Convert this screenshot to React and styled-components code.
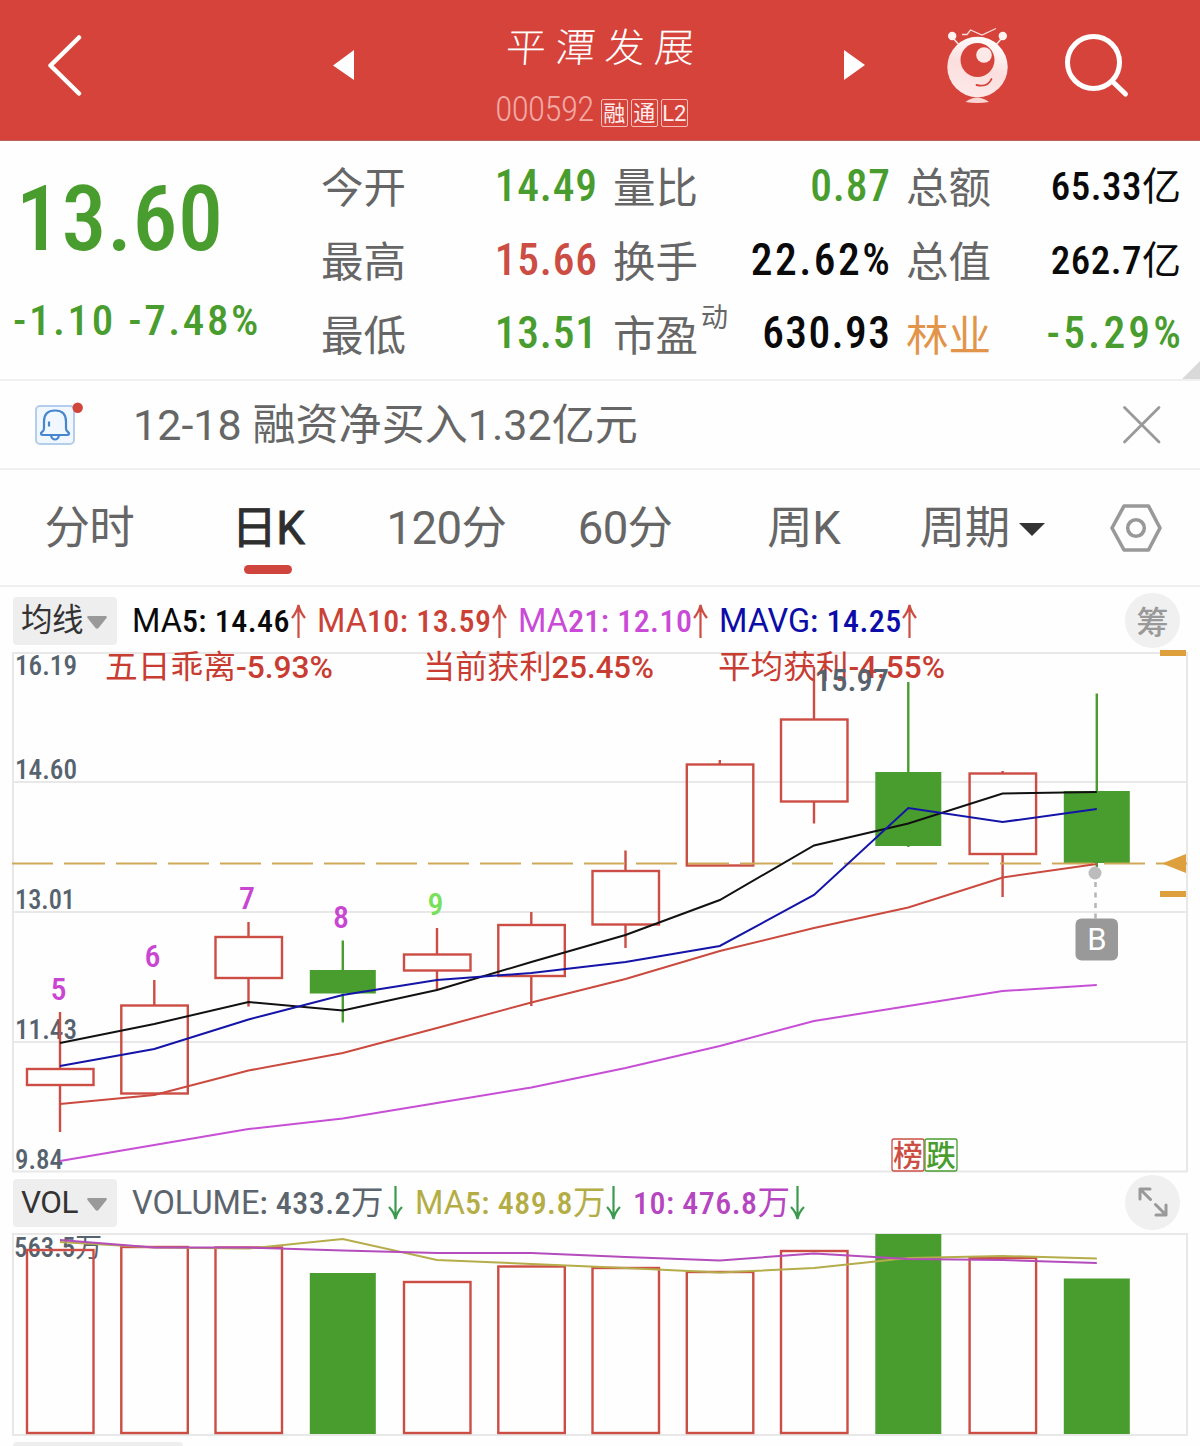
import React from "react";
import styled, { createGlobalStyle } from "styled-components";

const RED = "#d6433b";
const UP = "#cb4d44";
const GREEN = "#489d2e";
const SLATE = "#56636e";
const FONT = `Roboto, "Noto Sans CJK SC", "Liberation Sans", sans-serif`;

const Global = createGlobalStyle`
  * { box-sizing: border-box; }
  body { margin: 0; background: #fefefe; font-family: ${FONT}; }
  svg { display: block; flex: none; }
`;

const Page = styled.main`
  width: 1200px;
  height: 1446px;
  overflow: hidden;
  display: flex;
  flex-direction: column;
  background: #fefefe;
`;

/* Header */
const Header = styled.header`
  height: 141px;
  flex: none;
  display: grid;
  grid-template-columns: 333px 23px 488px 103px 117px 1fr;
  background: ${RED};
  border-bottom: 1px solid #b9635e;
  color: #fff;
`;
const HeaderCell = styled.div`
  padding-top: ${(p) => p.$top}px;
  padding-left: ${(p) => p.$left || 0}px;
`;
const TitleBlock = styled.div`
  display: flex;
  flex-direction: column;
  align-items: center;
`;
const StockName = styled.h1`
  margin: 20px 0 0;
  padding-left: 10px;
  font-size: 40px;
  line-height: 58px;
  font-weight: 300;
  letter-spacing: 9.5px;
  transform: skewX(-4deg);
`;
const CodeRow = styled.div`
  display: flex;
  align-items: center;
  gap: 3px;
  margin-top: 14px;
  margin-left: -17px;
  height: 36px;
`;
const Code = styled.span`
  font-size: 35px;
  font-weight: 300;
  font-stretch: 75%;
  letter-spacing: -0.6px;
  line-height: 36px;
  color: #f3a9a3;
  margin-right: 4px;
`;
const Badge = styled.span`
  width: 27px;
  height: 28px;
  margin-top: 5px;
  border: 1px solid #f6bdb8;
  border-radius: 2px;
  font-size: 22px;
  line-height: 27px;
  text-align: center;
  color: #fdeceb;
`;

/* Quote */
const Quote = styled.section`
  height: 240px;
  flex: none;
  display: grid;
  grid-template-columns: 321px 276px 16px 277px 16px 275px 1fr;
  border-bottom: 2px solid #f0f0f0;
`;
const PriceBox = styled.div`
  display: flex;
  flex-direction: column;
  color: ${GREEN};
  font-weight: 500;
  font-stretch: 75%;
  white-space: nowrap;
`;
const Price = styled.div`
  margin: 27px 0 0 16px;
  font-size: 90px;
  line-height: 104px;
  letter-spacing: 0.5px;
`;
const Change = styled.div`
  margin: 23px 0 0 13px;
  font-size: 43px;
  line-height: 50px;
  letter-spacing: 2.6px;
`;
const StatColumn = styled.dl`
  margin: 0;
  padding-top: 9px;
  grid-column: ${(p) => p.$col};
`;
const Stat = styled.div`
  display: flex;
  justify-content: space-between;
  height: 73.7px;
  align-items: center;
`;
const StatLabel = styled.dt`
  display: flex;
  margin-top: 5px;
  font-size: 42.5px;
  line-height: 74px;
  color: ${(p) => p.$color || "#666"};
`;
const Sup = styled.sup`
  font-size: 27px;
  line-height: 30px;
  margin: 3px 0 0 3px;
`;
const StatValue = styled.dd`
  margin: 0 ${(p) => (p.$track ? -p.$track : -0.8)}px 0 0;
  font-size: ${(p) => (p.$small ? 39 : 43.5)}px;
  font-weight: 500;
  font-stretch: 75%;
  line-height: 74px;
  letter-spacing: ${(p) => p.$track || 0.8}px;
  color: ${(p) => p.$color || "#0a0a0a"};
`;
const Unit = styled.span`
  font-weight: 400;
`;
const Corner = styled.div`
  align-self: end;
  justify-self: end;
  width: 18px;
  height: 18px;
  background: #d9d9d9;
  clip-path: polygon(100% 0, 100% 100%, 0 100%);
`;

/* Notice */
const Notice = styled.section`
  height: 89px;
  flex: none;
  display: flex;
  align-items: center;
  padding: 0 38px 0 34px;
  border-bottom: 2px solid #f0f0f0;
`;
const NoticeText = styled.p`
  flex: 1;
  margin: 1px 0 0 49px;
  color: #666;
  font-size: 43px;
  line-height: 60px;
  letter-spacing: 0.05px;
  white-space: nowrap;
`;

/* Period tabs */
const Tabs = styled.nav`
  height: 117px;
  flex: none;
  display: grid;
  grid-template-columns: repeat(6, 178.6px) 1fr;
  border-bottom: 2px solid #f0f0f0;
`;
const Tab = styled.button`
  border: 0;
  padding: 28px 0 0;
  background: none;
  font-family: inherit;
  font-size: 45.5px;
  line-height: 62px;
  letter-spacing: -0.6px;
  color: ${(p) => (p.$active ? "#2e2e2e" : "#666")};
  font-weight: 400;
  -webkit-text-stroke: ${(p) => (p.$active ? 0.9 : 0)}px #2e2e2e;
  display: flex;
  flex-direction: column;
  align-items: center;
  white-space: nowrap;
`;
const TabLabel = styled.span`
  display: flex;
  align-items: center;
  gap: 9px;
`;
const Underline = styled.span`
  width: 48px;
  height: 9px;
  margin-top: 5px;
  border-radius: 5px;
  background: #cf443c;
`;
const SettingsCell = styled.div`
  display: flex;
  justify-content: center;
  padding-top: 34px;
`;

/* Indicator legends */
const LegendBar = styled.div`
  height: ${(p) => p.$height}px;
  flex: none;
  display: flex;
  align-items: center;
  padding: ${(p) => p.$top || 0}px 20px 0 13px;
`;
const Selector = styled.button`
  width: 104px;
  height: 48px;
  border: 0;
  border-radius: 4px;
  padding: 0 10px 0 8px;
  display: flex;
  align-items: center;
  justify-content: space-between;
  background: #eee;
  color: #333;
  font-family: inherit;
  font-size: 31.5px;
  line-height: 46px;
  letter-spacing: -0.5px;
  & > svg { margin-top: 3px; }
`;
const Items = styled.div`
  flex: 1;
  display: flex;
  margin-left: 15px;
  margin-top: -1px;
  gap: ${(p) => p.$gap}px;
`;
const Item = styled.div`
  width: ${(p) => p.$width}px;
  display: flex;
  justify-content: space-between;
  align-items: center;
  color: ${(p) => p.$color};
  font-size: 32.5px;
  line-height: 46px;
  white-space: nowrap;
`;
const Name = styled.span`
  font-weight: 400;
`;
const Num = styled.span`
  font-weight: 500;
  font-stretch: 75%;
  font-size: 32px;
  letter-spacing: 0.45px;
`;
const Round = styled.div`
  width: 55px;
  height: 55px;
  margin-top: -2px;
  border-radius: 50%;
  background: #f0f0f0;
  color: #999;
  font-size: 32px;
  font-weight: 500;
  display: flex;
  align-items: center;
  justify-content: center;
`;
const NextPanel = styled.div`
  width: 170px;
  height: 20px;
  flex: none;
  margin: 6px 0 0 13px;
  border-radius: 4px;
  background: #eee;
`;

const Chart = styled.svg`
  overflow: visible;
`;
const SvgText = styled.text`
  font-family: ${FONT};
  font-weight: ${(p) => p.$weight || 500};
  font-size: ${(p) => p.$size || 27}px;
  font-stretch: ${(p) => (p.$wide ? 100 : 75)}%;
`;
const Han = styled.tspan`
  font-weight: 400;
  font-size: ${(p) => (p.$size ? `${p.$size}px` : "inherit")};
`;

const X = [60, 154.3, 248.5, 342.8, 437, 531.3, 625.5, 719.8, 814, 908.3, 1002.6, 1096.8];
// high, body top, body bottom, low
const CANDLES = [
  [1012, 1069, 1085, 1132], [980, 1005.5, 1093.5, 1095], [922, 937, 978, 1006.5],
  [940.5, 970, 993.5, 1022.5], [928, 954.5, 970.5, 990], [912, 925, 976, 1006],
  [850.5, 871, 924.5, 948], [760, 764.5, 865.5, 866], [667, 719.5, 801.5, 823.5],
  [682, 772, 846, 847], [771, 773.5, 854, 897], [693.5, 791, 863, 867],
];
const FALLING = [3, 9, 11];
const MA = [
  ["#cb4a3f", [1104, 1095, 1070.5, 1053, 1028, 1002.5, 979, 951, 928, 907.5, 877.5, 864]],
  ["#c74fd6", [1161, 1145, 1129, 1118.5, 1103, 1087.5, 1068, 1046, 1021, 1006, 991, 985]],
  ["#111", [1043, 1024, 1002, 1010.5, 990, 962, 935, 900, 845.5, 823.5, 793.5, 792]],
  ["#1414a8", [1066, 1049, 1019.5, 995, 980, 973, 962, 946, 895, 808, 822, 809]],
];
const VOLUMES = [1250, 1247, 1247.5, 1273, 1282, 1266.5, 1268, 1272, 1251, 1234, 1258, 1278.5];
const VOL_MA = [
  ["#b5ac4a", [1242, 1247.5, 1248.5, 1239, 1260, 1264, 1268, 1272.5, 1268, 1258, 1256, 1258.5]],
  ["#b44cbc", [1240, 1247.5, 1247.5, 1250.5, 1253, 1253, 1257, 1260.5, 1253.5, 1259, 1260, 1263]],
];
const points = (ys) => ys.map((y, i) => `${X[i]},${y}`).join(" ");

function Lines({ data }) {
  return data.map(([color, ys]) => (
    <polyline key={color} points={points(ys)} fill="none" stroke={color} strokeWidth="2" />
  ));
}

function Label({ x, y, w, children, ...rest }) {
  return (
    <SvgText x={x} y={y} textLength={w} lengthAdjust="spacingAndGlyphs" {...rest}>
      {children}
    </SvgText>
  );
}

function PriceChart() {
  return (
    <Chart width="1200" height="521" viewBox="0 652 1200 521">
      <g fill="none" stroke="#e8e8e8" strokeWidth="2">
        <rect x="13" y="653" width="1174" height="518.5" />
        <path d="M13 782H1187M13 912H1187M13 1042H1187" />
      </g>
      <g fill={SLATE}>
        <Label x="15" y="675" w="62">16.19</Label>
        <Label x="15" y="779" w="62">14.60</Label>
        <Label x="15" y="909" w="60">13.01</Label>
        <Label x="15" y="1039" w="62">11.43</Label>
        <Label x="15" y="1169" w="48">9.84</Label>
      </g>
      {CANDLES.map(([hi, top, bottom, lo], i) => {
        const falling = FALLING.includes(i);
        const color = falling ? GREEN : UP;
        return (
          <g key={i} stroke={color} strokeWidth="2.4" fill={falling ? GREEN : "none"}>
            <path d={`M${X[i]} ${hi}V${top}M${X[i]} ${bottom}V${lo}`} />
            {falling ? (
              <rect x={X[i] - 33} y={top} width="66" height={bottom - top} stroke="none" />
            ) : (
              <rect x={X[i] - 33} y={top} width="66.5" height={bottom - top} />
            )}
          </g>
        );
      })}
      <path d="M12 863.5H1187" stroke="#cfa95a" strokeWidth="2" strokeDasharray="41 11" />
      <Lines data={MA} />
      <g fill="#c93c32">
        <Label x="105" y="677.5" w="228" $size="31" $wide><Han $size="32">五日乖离</Han>-5.93%</Label>
        <Label x="423" y="677.5" w="231" $size="31" $wide><Han $size="32">当前获利</Han>25.45%</Label>
        <Label x="718" y="677.5" w="227" $size="31" $wide><Han $size="32">平均获利</Han>-4.55%</Label>
      </g>
      <Label x="815" y="691" w="74" $size="32" fill={SLATE}>15.97</Label>
      <g fill="#c846d2" textAnchor="middle">
        <SvgText x="58.5" y="1000" $size="32">5</SvgText>
        <SvgText x="152.5" y="967" $size="32">6</SvgText>
        <SvgText x="247" y="909" $size="32">7</SvgText>
        <SvgText x="341" y="928" $size="32">8</SvgText>
        <SvgText x="435.5" y="914.5" $size="32" fill="#78e05a">9</SvgText>
      </g>
      <g fill="#dda03c">
        <rect x="1160" y="650" width="26" height="6" />
        <rect x="1160" y="891" width="26" height="6" />
        <path d="M1162 863.5L1186 854V873Z" />
      </g>
      <circle cx="1095" cy="873" r="6.5" fill="#bcbcbc" />
      <path d="M1095.5 882V919" stroke="#b5b5b5" strokeWidth="2.5" strokeDasharray="5 5.5" />
      <rect x="1075.5" y="918.5" width="42.5" height="42" rx="6" fill="#999" />
      <SvgText x="1097" y="949.5" $size="31" $weight="400" $wide fill="#fff" textAnchor="middle">B</SvgText>
      <rect x="892" y="1139" width="32" height="32" rx="2" fill="#fff" stroke={UP} strokeWidth="1.3" />
      <rect x="925" y="1139" width="32" height="32" rx="2" fill="#fff" stroke={GREEN} strokeWidth="1.3" />
      <SvgText x="908" y="1165.5" $size="29.5" fill={UP} textAnchor="middle">榜</SvgText>
      <SvgText x="941" y="1165.5" $size="29.5" fill={GREEN} textAnchor="middle">跌</SvgText>
    </Chart>
  );
}

function VolumeChart() {
  return (
    <Chart width="1200" height="203" viewBox="0 1233 1200 203">
      <rect x="13" y="1234" width="1174" height="201" fill="none" stroke="#e8e8e8" strokeWidth="2" />
      <Label x="14" y="1257" w="88" fill={SLATE}>563.5<Han>万</Han></Label>
      {VOLUMES.map((top, i) =>
        FALLING.includes(i) ? (
          <rect key={i} x={X[i] - 33} y={top} width="66" height={1434 - top} fill={GREEN} />
        ) : (
          <rect key={i} x={X[i] - 33} y={top} width="66.5" height={1433 - top} fill="none" stroke={UP} strokeWidth="2.4" />
        )
      )}
      <Lines data={VOL_MA} />
    </Chart>
  );
}

function Arrow({ down }) {
  return (
    <svg width="15" height="36" viewBox="0 0 15 36" fill="none" stroke={down ? "#3c9a4e" : UP} strokeWidth="2.2">
      <path d={down ? "M7.5 1V34M1 22Q6 27 7.5 34Q9 27 14 22" : "M7.5 35V2M1 15Q6 9 7.5 2Q9 9 14 15"} />
    </svg>
  );
}

function Caret() {
  return (
    <svg width="20" height="13" viewBox="0 0 20 13">
      <path d="M1.5 0H18.5Q20.5 0 19.5 2L11.5 12Q10 13.5 8.5 12L.5 2Q-.5 0 1.5 0Z" fill="#999" />
    </svg>
  );
}

function Robot() {
  return (
    <svg width="62" height="78" viewBox="947 26 62 78">
      <defs>
        <linearGradient id="face" x1="0.6" y1="0" x2="0.3" y2="1">
          <stop offset="0" stopColor="#fff" />
          <stop offset="0.5" stopColor="#fbdedd" />
          <stop offset="1" stopColor="#fdeae9" />
        </linearGradient>
      </defs>
      <g stroke="#fbdcda" fill="none" strokeWidth="1.8">
        <path d="M953 38L960 46M1002 38L995 46" />
        <path d="M962 34.5H967L970.5 30L982 35L996 28.5" strokeWidth="1.3" />
      </g>
      <circle cx="952.2" cy="36" r="4.2" fill="#fff3f2" />
      <circle cx="1002.8" cy="36" r="4.2" fill="#fff3f2" />
      <circle cx="977.5" cy="67" r="30.2" fill="url(#face)" />
      <circle cx="977.5" cy="60" r="17" fill={RED} />
      <circle cx="984" cy="55" r="7.8" fill="#fde9e8" />
      <path d="M976.5 85Q988 87.5 991.5 79" fill="none" stroke={RED} strokeWidth="1.8" strokeLinecap="round" />
      <path d="M965.5 102Q977 93 989 102Q977 104 965.5 102Z" fill="#fbd5d3" />
    </svg>
  );
}

const STATS = [
  { col: 2, rows: [["今开", "14.49", GREEN], ["最高", "15.66", UP], ["最低", "13.51", GREEN]] },
  {
    col: 4,
    rows: [
      ["量比", "0.87", GREEN],
      ["换手", "22.62%", null, { track: 2.5 }],
      ["市盈", "630.93", null, { sup: "动", track: 1.4 }],
    ],
  },
  {
    col: 6,
    rows: [
      ["总额", "65.33", null, { unit: "亿", track: 0.5 }],
      ["总值", "262.7", null, { unit: "亿", track: 0.5 }],
      ["林业", "-5.29%", GREEN, { labelColor: "#e2954a", track: 3.2 }],
    ],
  },
];

export default function App() {
  return (
    <>
      <Global />
      <Page>
        <Header>
          <HeaderCell $top={35} $left={47}>
            <svg width="36" height="62" viewBox="0 0 36 62" fill="none" stroke="#fff" strokeWidth="4.5" strokeLinecap="round" strokeLinejoin="round">
              <path d="M32 2.5L3.5 30.5L32 58.5" />
            </svg>
          </HeaderCell>
          <HeaderCell $top={50}>
            <svg width="21" height="30" viewBox="0 0 21 30"><path d="M21 0V30L0 15.5Z" fill="#fff" /></svg>
          </HeaderCell>
          <TitleBlock>
            <StockName>平潭发展</StockName>
            <CodeRow>
              <Code>000592</Code>
              <Badge>融</Badge>
              <Badge>通</Badge>
              <Badge>L2</Badge>
            </CodeRow>
          </TitleBlock>
          <HeaderCell $top={50}>
            <svg width="21" height="30" viewBox="0 0 21 30"><path d="M0 0V30L21 15Z" fill="#fff" /></svg>
          </HeaderCell>
          <HeaderCell $top={26}><Robot /></HeaderCell>
          <HeaderCell $top={33}>
            <svg width="66" height="66" viewBox="0 0 66 66" fill="none" stroke="#fff" strokeWidth="5" strokeLinecap="round">
              <circle cx="29.5" cy="29.5" r="26" />
              <path d="M49 49L61.5 61" />
            </svg>
          </HeaderCell>
        </Header>

        <Quote>
          <PriceBox>
            <Price>13.60</Price>
            <Change>-1.10 -7.48%</Change>
          </PriceBox>
          {STATS.map(({ col, rows }) => (
            <StatColumn key={col} $col={col}>
              {rows.map(([label, value, color, extra = {}]) => (
                <Stat key={label}>
                  <StatLabel $color={extra.labelColor}>
                    {label}
                    {extra.sup && <Sup>{extra.sup}</Sup>}
                  </StatLabel>
                  <StatValue $color={color} $small={!!extra.unit} $track={extra.track}>
                    {value}
                    {extra.unit && <Unit>{extra.unit}</Unit>}
                  </StatValue>
                </Stat>
              ))}
            </StatColumn>
          ))}
          <Corner />
        </Quote>

        <Notice>
          <svg width="50" height="46" viewBox="34 401.5 50 46" fill="none" stroke="#4586cf" strokeWidth="2.2">
            <rect x="36" y="405.5" width="38" height="38" rx="4" fill="#f1f7fe" stroke="#b4cdec" strokeWidth="2" />
            <path d="M44 428V421C44 414 48 410 55 410C62 410 66 414 66 421V428Q66 430 68 431.5C70 433 69 434.5 67 434.5H43C41 434.5 40 433 42 431.5Q44 430 44 428Z" strokeLinejoin="round" />
            <path d="M51 435Q52 439 55 439Q58 439 59 435M49 421V426" />
            <circle cx="77.7" cy="407.3" r="5.2" fill="#d0453c" stroke="none" />
          </svg>
          <NoticeText>12-18 融资净买入1.32亿元</NoticeText>
          <svg width="40" height="40" viewBox="0 0 40 40" stroke="#999" strokeWidth="2.8" strokeLinecap="round">
            <path d="M2.5 2.5L37 37M37 2.5L2.5 37" />
          </svg>
        </Notice>

        <Tabs>
          <Tab>分时</Tab>
          <Tab $active>日K<Underline /></Tab>
          <Tab>120分</Tab>
          <Tab>60分</Tab>
          <Tab>周K</Tab>
          <Tab>
            <TabLabel>
              周期
              <svg width="26" height="13" viewBox="0 0 26 13"><path d="M0 0H26L13 13Z" fill="#333" /></svg>
            </TabLabel>
          </Tab>
          <SettingsCell>
            <svg width="52" height="48" viewBox="0 0 52 48" fill="none" stroke="#999" strokeWidth="3.6" strokeLinejoin="round">
              <path d="M14 2H38.5L50 24L38.5 46H14L2 24Z" />
              <circle cx="26" cy="24" r="8.3" />
            </svg>
          </SettingsCell>
        </Tabs>

        <LegendBar $height={65} $top={3}>
          <Selector>均线<Caret /></Selector>
          <Items $gap={11}>
            <Item $width={174} $color="#0a0a0a"><span><Name>MA</Name><Num>5: 14.46</Num></span><Arrow /></Item>
            <Item $width={190} $color="#cb4136"><span><Name>MA</Name><Num>10: 13.59</Num></span><Arrow /></Item>
            <Item $width={190} $color="#c94ad6"><span><Name>MA</Name><Num>21: 12.10</Num></span><Arrow /></Item>
            <Item $width={197} $color="#0c0ca8"><span><Name>MAVG</Name><Num>: 14.25</Num></span><Arrow /></Item>
          </Items>
          <Round>筹</Round>
        </LegendBar>
        <PriceChart />
        <LegendBar $height={60}>
          <Selector>VOL<Caret /></Selector>
          <Items $gap={12}>
            <Item $width={271} $color="#5c656d"><span><Name>VOLUME</Name><Num>: 433.2</Num><Name>万</Name></span><Arrow down /></Item>
            <Item $width={206} $color="#b4ad45"><span><Name>MA</Name><Num>5: 489.8</Num><Name>万</Name></span><Arrow down /></Item>
            <Item $width={170} $color="#b546c0"><span><Num>10: 476.8</Num><Name>万</Name></span><Arrow down /></Item>
          </Items>
          <Round>
            <svg width="30" height="30" viewBox="0 0 30 30" fill="none" stroke="#999" strokeWidth="3" strokeLinecap="round" strokeLinejoin="round">
              <path d="M12 2H2V12M2 2L12.5 12.5M28 18V28H18M28 28L17.5 17.5" />
            </svg>
          </Round>
        </LegendBar>
        <VolumeChart />
        <NextPanel />
      </Page>
    </>
  );
}
